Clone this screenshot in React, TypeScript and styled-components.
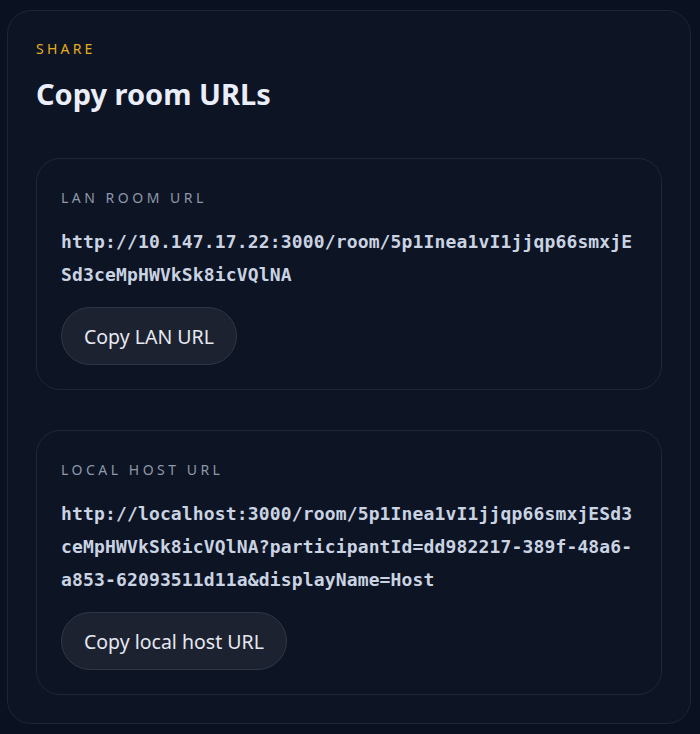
import styled, { createGlobalStyle } from "styled-components";

const GlobalStyle = createGlobalStyle`
  html, body {
    margin: 0;
    padding: 0;
    background: #0a1120;
  }

  body {
    font-family: "Noto Sans", "Open Sans", sans-serif;
  }

  #root {
    width: 700px;
  }
`;

interface RoomLink {
  label: string;
  url: string;
  button: string;
}

const links: RoomLink[] = [
  {
    label: "LAN room URL",
    url: "http://10.147.17.22:3000/room/5p1Inea1vI1jjqp66smxjESd3ceMpHWVkSk8icVQlNA",
    button: "Copy LAN URL",
  },
  {
    label: "Local host URL",
    url: "http://localhost:3000/room/5p1Inea1vI1jjqp66smxjESd3ceMpHWVkSk8icVQlNA?participantId=dd982217-389f-48a6-a853-62093511d11a&displayName=Host",
    button: "Copy local host URL",
  },
];

export default function App() {
  const handleCopy = (url: string) => {
    if (navigator.clipboard) navigator.clipboard.writeText(url).catch(() => {});
  };

  return (
    <>
      <GlobalStyle />
      <Panel>
        <Eyebrow>Share</Eyebrow>
        <Title>Copy room URLs</Title>
        <LinkList>
          {links.map((link) => (
            <LinkCard key={link.label}>
              <LinkLabel>{link.label}</LinkLabel>
              <Url>{link.url}</Url>
              <CopyButton type="button" onClick={() => handleCopy(link.url)}>
                {link.button}
              </CopyButton>
            </LinkCard>
          ))}
        </LinkList>
      </Panel>
    </>
  );
}

const Panel = styled.section`
  margin: 10px 9px 12px 7px;
  padding: 28px;

  background: #0d1424;
  border: 1px solid #1d2636;
  border-radius: 24px;
`;

const Eyebrow = styled.div`
  font-size: 14px;
  line-height: 20px;
  letter-spacing: 0.23em;
  text-transform: uppercase;
  color: #e6ac1f;
`;

const Title = styled.h2`
  margin: 17px 0 0;

  font-size: 29px;
  line-height: 36px;
  font-weight: 700;
  color: #eaeefa;
`;

const LinkList = styled.div`
  display: flex;
  flex-direction: column;
  gap: 40px;

  margin-top: 46px;
`;

const LinkCard = styled.div`
  display: flex;
  flex-direction: column;
  align-items: flex-start;

  padding: 28px 24px 24px;

  background: #0d1424;
  border: 1px solid #1f2838;
  border-radius: 24px;
`;

const LinkLabel = styled.div`
  font-size: 14px;
  line-height: 22px;
  letter-spacing: 0.25em;
  text-transform: uppercase;
  color: #8e98aa;
`;

const Url = styled.div`
  width: 100%;
  margin: 16px 0;

  font-family: "DejaVu Sans Mono", "Liberation Mono", monospace;
  font-size: 18px;
  letter-spacing: 0.15px;
  line-height: 33px;
  font-weight: 700;
  color: #c9d3e2;

  word-break: break-all;
`;

const CopyButton = styled.button`
  height: 58px;
  padding: 0 22px;

  font-family: "Noto Sans", "Open Sans", sans-serif;
  font-size: 19.5px;
  color: #e4e8f0;

  background: #1d2231;
  border: 1px solid #2f3747;
  border-radius: 999px;

  cursor: pointer;
`;
